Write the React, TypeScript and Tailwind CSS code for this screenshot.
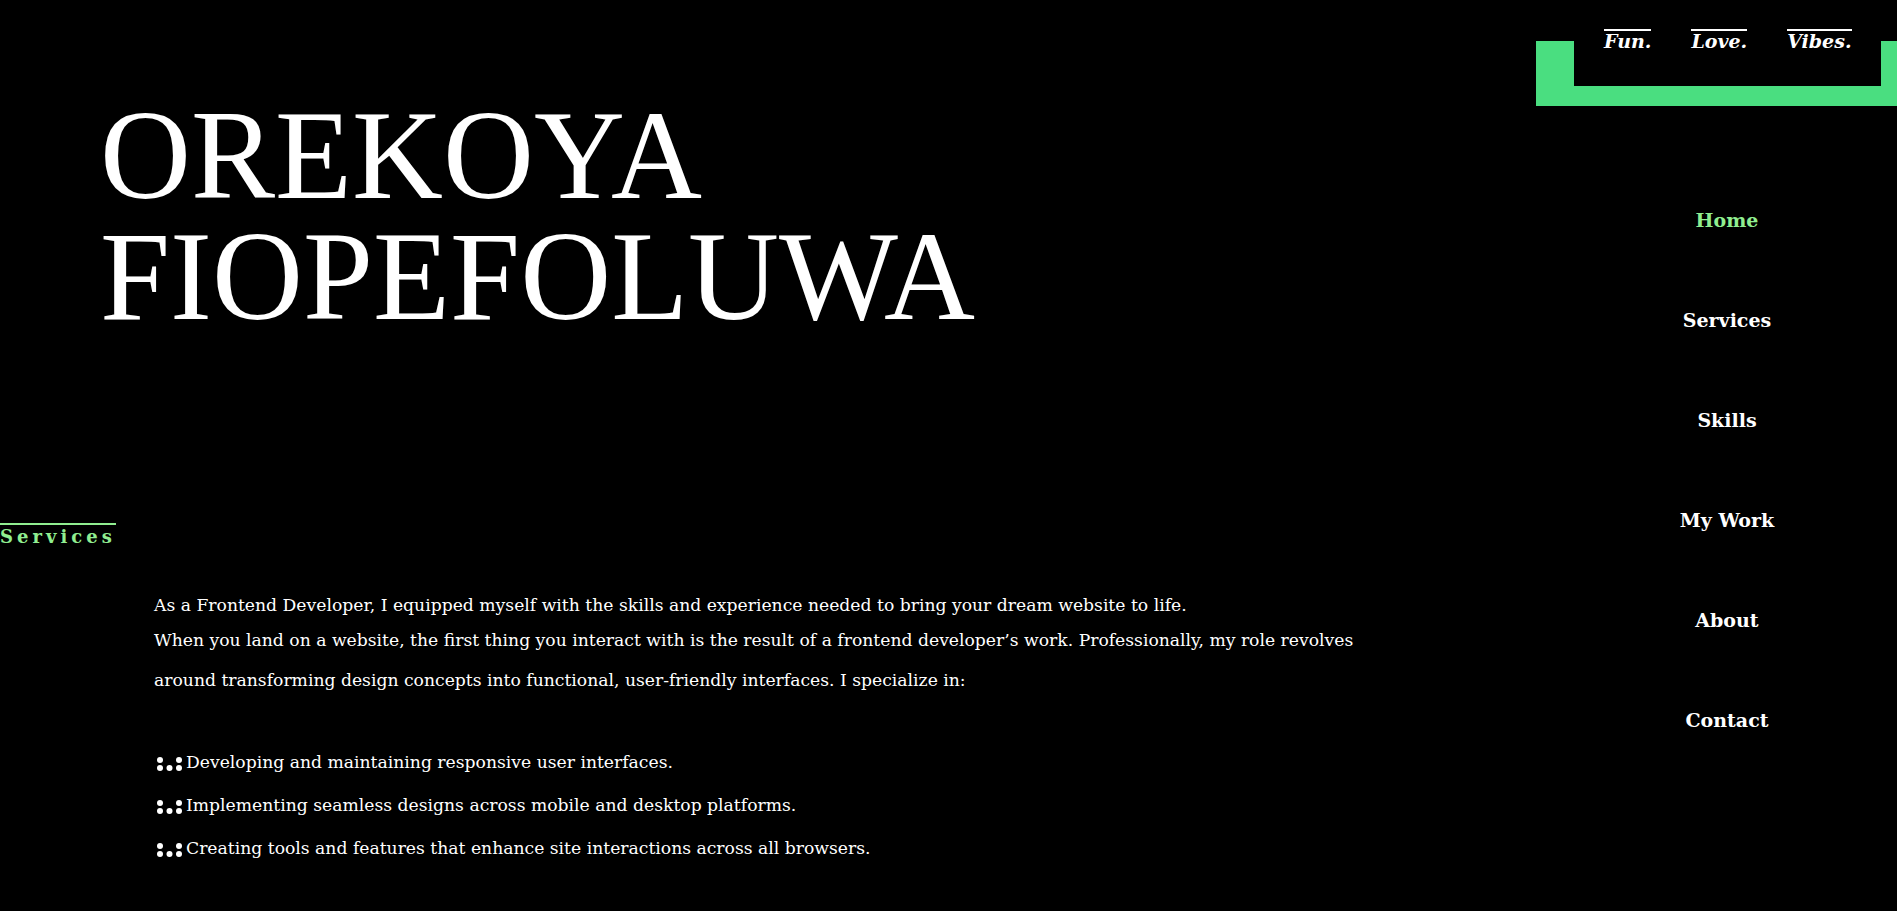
const navLinks = ['Home', 'Services', 'Skills', 'My Work', 'About', 'Contact']
const tags = ['Fun.', 'Love.', 'Vibes.']
const services = [
  'Developing and maintaining responsive user interfaces.',
  'Implementing seamless designs across mobile and desktop platforms.',
  'Creating tools and features that enhance site interactions across all browsers.',
]

const Dots = () => (
  <svg width="30" height="16" viewBox="0 0 30 16" className="shrink-0 mr-[2px]" fill="white">
    <circle cx="6" cy="5" r="3" />
    <circle cx="25" cy="5" r="3" />
    <circle cx="6" cy="13" r="3" />
    <circle cx="15.5" cy="13" r="3" />
    <circle cx="25" cy="13" r="3" />
  </svg>
)

export default function App() {
  return (
    <div className="w-full h-[911px] bg-black text-white overflow-hidden flex font-['DejaVu_Serif',serif]">
      <main className="flex-1 flex flex-col">
        <h1 className="mt-[95px] pl-[100px] text-[126px] leading-[121px] font-['Liberation_Serif',serif] font-normal">
          OREKOYA
          <br />
          FIOPEFOLUWA
        </h1>

        <div className="mt-[186px] w-fit border-t-2 border-[#90ee90] text-[#90ee90] text-[18px] font-bold leading-[24px] tracking-[4px]">
          Services
        </div>

        <section className="mt-[41px] pl-[154px] w-[1400px] text-[17.2px]">
          <p className="leading-[30px]">
            As a Frontend Developer, I equipped myself with the skills and experience needed to bring your dream website to life.
          </p>
          <p className="leading-[40px]">
            When you land on a website, the first thing you interact with is the result of a frontend developer’s work. Professionally, my role revolves around transforming design concepts into functional, user-friendly interfaces. I specialize in:
          </p>
          <ul className="mt-[41px]">
            {services.map((s) => (
              <li key={s} className="flex items-center leading-[43px]">
                <Dots />
                <span>{s}</span>
              </li>
            ))}
          </ul>
        </section>
      </main>

      <aside className="w-[361px] shrink-0 flex flex-col">
        <div className="mt-[41px] h-[65px] border-l-[38px] border-b-[20px] border-r-[16px] border-[#4ade80]">
          <div className="-mt-[12px] pl-[30px] flex gap-[40px]">
            {tags.map((t) => (
              <a key={t} href="#" className="border-t-2 border-white italic font-bold text-[19px] leading-[20px]">
                {t}
              </a>
            ))}
          </div>
        </div>

        <nav className="mt-[102px] pl-[21px] flex flex-col items-center gap-[76px]">
          {navLinks.map((l) => (
            <a
              key={l}
              href="#"
              className={l === 'Home' ? 'text-[#90ee90] font-bold text-[19px] leading-[24px]' : 'font-bold text-[19px] leading-[24px]'}
            >
              {l}
            </a>
          ))}
        </nav>
      </aside>
    </div>
  )
}
